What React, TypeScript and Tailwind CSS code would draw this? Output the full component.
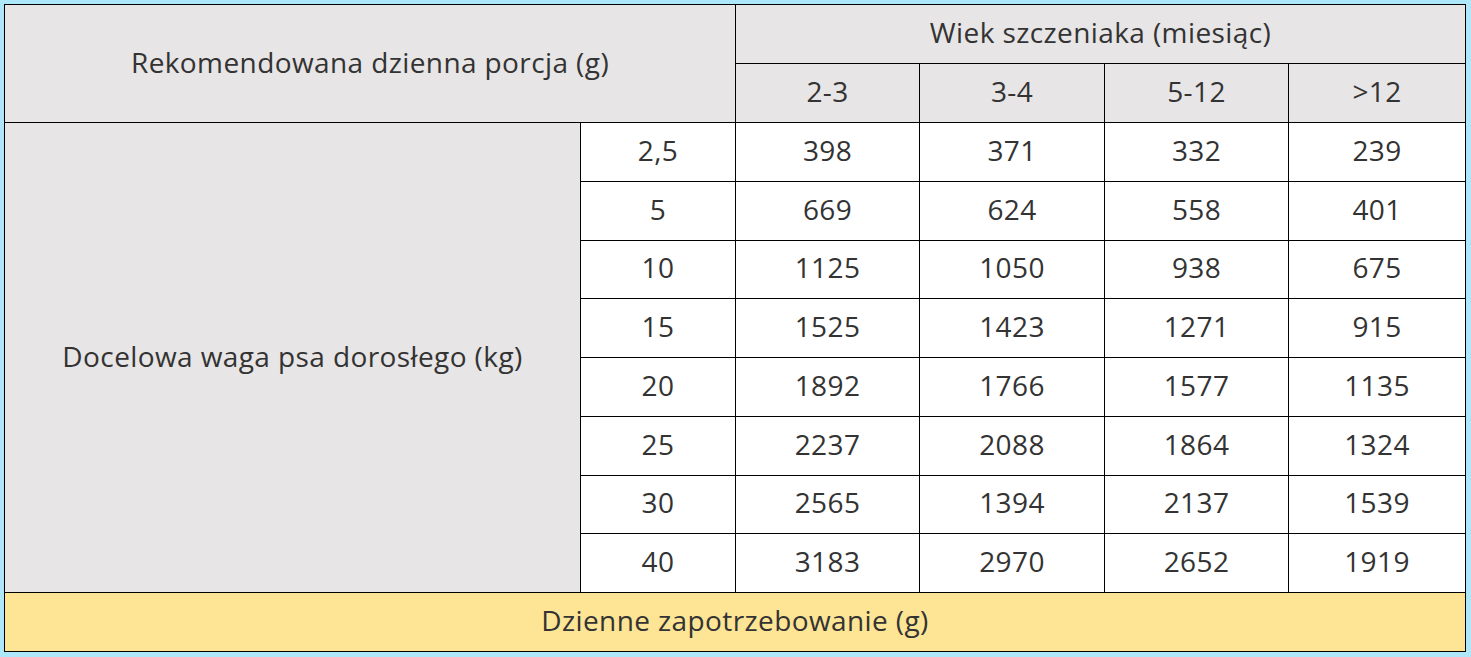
import React from "react";

const ages = ["2-3", "3-4", "5-12", ">12"];

const rows = [
  { kg: "2,5", vals: ["398", "371", "332", "239"] },
  { kg: "5", vals: ["669", "624", "558", "401"] },
  { kg: "10", vals: ["1125", "1050", "938", "675"] },
  { kg: "15", vals: ["1525", "1423", "1271", "915"] },
  { kg: "20", vals: ["1892", "1766", "1577", "1135"] },
  { kg: "25", vals: ["2237", "2088", "1864", "1324"] },
  { kg: "30", vals: ["2565", "1394", "2137", "1539"] },
  { kg: "40", vals: ["3183", "2970", "2652", "1919"] },
];

const cell = "border border-black text-center align-middle px-0 pt-0 pb-[4px] leading-none";

export default function App() {
  return (
    <div className="w-[1471px] h-[657px] bg-[#aee7fa] pt-[4px] pl-[4px] font-['Open_Sans',sans-serif] text-[28px] tracking-[0.4px] text-[#333333]">
      <table className="border-collapse table-fixed w-[1461px]">
        <colgroup>
          <col className="w-[576px]" />
          <col className="w-[155px]" />
          <col className="w-[184px]" />
          <col className="w-[185px]" />
          <col className="w-[184px]" />
          <col className="w-[177px]" />
        </colgroup>
        <thead>
          <tr className="h-[59px] bg-[#e7e5e5]">
            <th colSpan={2} rowSpan={2} className={`${cell} font-normal`}>
              Rekomendowana dzienna porcja (g)
            </th>
            <th colSpan={4} className={`${cell} font-normal`}>
              Wiek szczeniaka (miesiąc)
            </th>
          </tr>
          <tr className="h-[59px] bg-[#e7e5e5]">
            {ages.map((a) => (
              <th key={a} className={`${cell} font-normal`}>
                {a}
              </th>
            ))}
          </tr>
        </thead>
        <tbody>
          {rows.map((r, i) => (
            <tr key={r.kg} className="h-[58.75px]">
              {i === 0 && (
                <td rowSpan={8} className={`${cell} bg-[#e7e5e5]`}>
                  Docelowa waga psa dorosłego (kg)
                </td>
              )}
              <td className={`${cell} bg-white`}>{r.kg}</td>
              {r.vals.map((v, j) => (
                <td key={j} className={`${cell} bg-white`}>
                  {v}
                </td>
              ))}
            </tr>
          ))}
          <tr className="h-[59px] bg-[#fde595]">
            <td colSpan={6} className={cell}>
              Dzienne zapotrzebowanie (g)
            </td>
          </tr>
        </tbody>
      </table>
    </div>
  );
}
